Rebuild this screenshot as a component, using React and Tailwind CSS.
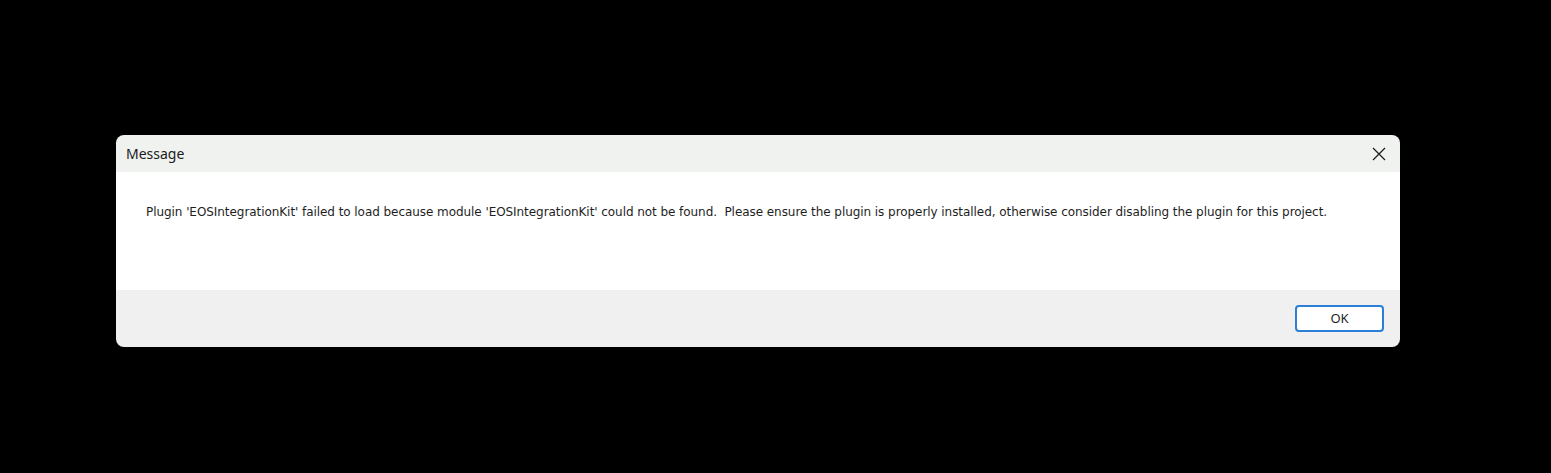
import React from 'react';

const App = () => {
  return (
    <div className="w-[1551px] h-[473px] bg-black pt-[135px] pl-[116px]" style={{ fontFamily: '"Noto Sans", sans-serif' }}>
      <div className="w-[1284px] h-[212px] rounded-lg overflow-hidden flex flex-col">
        {/* Title bar */}
        <div className="h-[37px] bg-[#eff2ef] flex items-center justify-between pl-[10px] pr-[14px]">
          <span className="text-[14px] text-[#1b1b1b]">Message</span>
          <svg width="14" height="14" viewBox="0 0 14 14" className="text-[#1b1b1b]">
            <path d="M1 1L13 13M13 1L1 13" stroke="currentColor" strokeWidth="1.2" />
          </svg>
        </div>

        {/* Body */}
        <div className="h-[118px] bg-white pl-[30px] pt-[31px]">
          <p className="text-[12px] text-[#1e1e1e] tracking-[-0.06px]" style={{ fontFamily: '"DejaVu Sans", sans-serif' }}>
            Plugin 'EOSIntegrationKit' failed to load because module 'EOSIntegrationKit' could not be found.&nbsp; Please ensure the plugin is properly installed, otherwise consider disabling the plugin for this project.
          </p>
        </div>

        {/* Footer */}
        <div className="flex-1 bg-[#f0f0f0] flex justify-end pt-[15px] pr-[16px]">
          <button className="w-[89px] h-[27px] rounded-[4px] border-2 border-[#2b7fd6] bg-white text-[13px] text-[#1e1e1e]">
            OK
          </button>
        </div>
      </div>
    </div>
  );
};

export default App;
